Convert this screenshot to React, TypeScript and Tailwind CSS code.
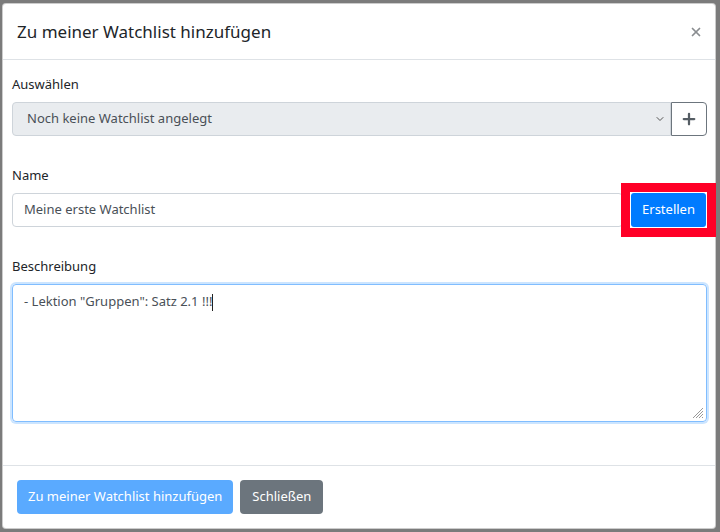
import { Plus, X, ChevronDown } from 'lucide-react';

const font = { fontFamily: '"Noto Sans", "Open Sans", Arial, sans-serif' };

function Field({ label, children }: { label: string; children: React.ReactNode }) {
  return (
    <div>
      <label className="block text-[13px] leading-[21px] text-[#212529] mb-[7px]">{label}</label>
      {children}
    </div>
  );
}

export default function App() {
  return (
    <div className="w-[720px] h-[532px] bg-[#7b7b7b] overflow-hidden relative" style={font}>
      <div className="absolute left-[2px] top-[3px] w-[714px] h-[526px] bg-white rounded-[4px] border border-black/20 flex flex-col">
        <div className="h-[56px] flex items-center justify-between pl-[14px] pr-[12px] border-b border-[#dee2e6]">
          <h5 className="text-[17px] text-[#212529]">Zu meiner Watchlist hinzufügen</h5>
          <button className="text-[#8a8d90]">
            <X size={14} strokeWidth={3} />
          </button>
        </div>

        <div className="flex-1 pl-[9px] pr-[8px] pt-[14px] flex flex-col gap-[29px]">
          <Field label="Auswählen">
            <div className="flex">
              <div className="flex-1 h-[34px] bg-[#e9ecef] border border-[#ced4da] rounded-l-[4px] flex items-center justify-between pl-[14px] pr-[4px] text-[13px] text-[#495057]">
                <span>Noch keine Watchlist angelegt</span>
                <ChevronDown size={12} className="text-[#555]" />
              </div>
              <button className="w-[36px] h-[34px] border border-[#6c757d] rounded-r-[4px] flex items-center justify-center text-[#555d64]">
                <Plus size={18} strokeWidth={3} />
              </button>
            </div>
          </Field>

          <Field label="Name">
            <div className="flex items-center">
              <div className="flex-1 h-[34px] border border-[#ced4da] rounded-[4px] flex items-center pl-[11px] text-[13px] text-[#495057] -mr-[2px]">
                Meine erste Watchlist
              </div>
              <div className="border-[9px] border-[#ff0027] -my-[10px] -mr-[9px]">
                <div className="border border-white">
                  <button className="h-[34px] w-[75px] bg-[#007bff] rounded-[3px] text-white text-[13px]">Erstellen</button>
                </div>
              </div>
            </div>
          </Field>

          <Field label="Beschreibung">
            <div className="relative mt-[1px] h-[138px] border border-[#80bdff] rounded-[4px] shadow-[0_0_0_2px_rgba(0,123,255,0.2)] pl-[11px] pt-[7px] text-[13px] text-[#495057]">
              <span>- Lektion "Gruppen": Satz 2.1 !!!</span>
              <span className="inline-block w-px h-[17px] bg-[#222] align-middle" />
              <svg className="absolute right-[2px] bottom-[2px]" width="12" height="12" viewBox="0 0 12 12">
                <path d="M11 1L1 11M11 4L4 11M11 7L7 11M11 10L10 11" stroke="#999" strokeWidth="1" />
              </svg>
            </div>
          </Field>
        </div>

        <div className="h-[63px] border-t border-[#dee2e6] flex items-start gap-[7px] pl-[14px] pt-[14px]">
          <button className="h-[34px] px-[11px] bg-[#5aaaff] rounded-[4px] text-white text-[13px]">Zu meiner Watchlist hinzufügen</button>
          <button className="h-[34px] px-[12px] bg-[#6c757d] rounded-[4px] text-white text-[13px]">Schließen</button>
        </div>
      </div>
    </div>
  );
}
